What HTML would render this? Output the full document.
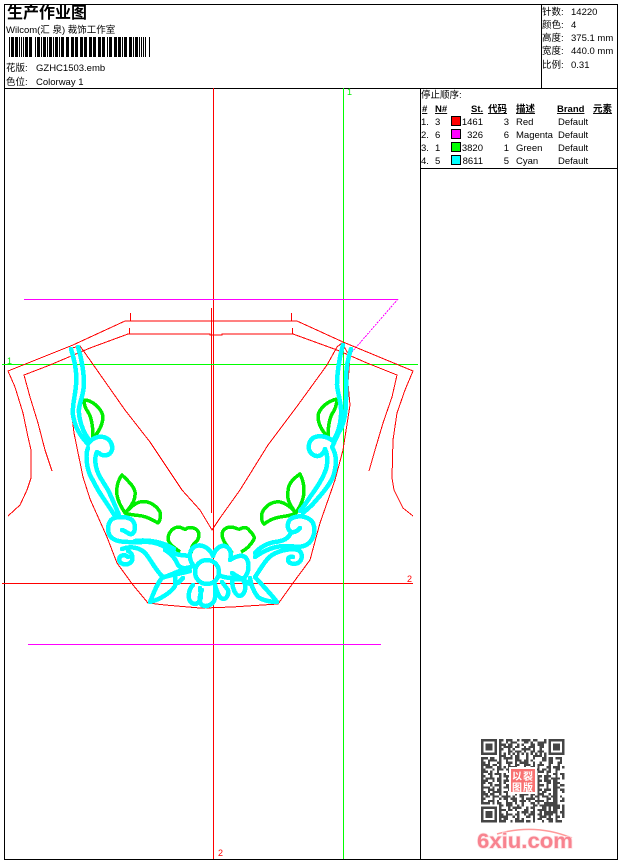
<!DOCTYPE html>
<html><head><meta charset="utf-8"><title>生产作业图</title>
<style>
html,body{margin:0;padding:0;background:#fff;width:620px;height:860px;overflow:hidden}
svg{display:block;position:absolute;left:0;top:0}
text{font-family:"Liberation Sans","WenQuanYi Zen Hei","Noto Sans CJK SC",sans-serif;font-size:9.5px;fill:#000}
.b{font-weight:bold;text-decoration:underline}
.l{fill:none;stroke:#000;stroke-width:1}
.r{fill:none;stroke:#f00;stroke-width:1}
.c{fill:none;stroke:#0ff;stroke-width:4.5;stroke-linejoin:round;stroke-linecap:round}
.g{fill:none;stroke:#0e0;stroke-width:3.5;stroke-linejoin:round}
.q path{fill:none;stroke:#444;stroke-width:1}
</style></head><body>
<svg width="620" height="860" viewBox="0 0 620 860" xmlns="http://www.w3.org/2000/svg">
<defs><filter id="bl" x="-5%" y="-5%" width="110%" height="110%"><feGaussianBlur stdDeviation="0.35"/></filter></defs>
<g shape-rendering="crispEdges">
<path d="M4.5 4.5H617.5V859.5H4.5Z" class="l"/>
<path d="M4.5 88.5H617.5M541.5 4.5V88.5M420.5 88.5V859.5M420.5 168.5H617.5" class="l"/>
<path d="M9 47H150" stroke="#000" stroke-width="20" fill="none" stroke-dasharray="1 1 3 1 3 1 1 1 1 1 1 1 3 1 3 3 1 1 3 1 1 1 3 1 1 1 3 1 1 1 3 1 1 1 3 2 3 2 3 1 3 2 3 1 3 2 3 1 3 2 3 1 3 2 1 1 3 2 3 1 3 1 1 1 3 2 3 1 1 1 3 1 1 1 1 1 1"/>
</g>
<text x="7" y="18" style="font-size:16px;font-weight:bold">生产作业图</text>
<text x="6" y="33">Wilcom(汇 泉) 裁饰工作室</text>
<text x="6" y="71">花版:</text><text x="36" y="71">GZHC1503.emb</text>
<text x="6" y="85">色位:</text><text x="36" y="85">Colorway 1</text>
<text x="542" y="15">针数:</text><text x="571" y="15">14220</text>
<text x="542" y="28">颜色:</text><text x="571" y="28">4</text>
<text x="542" y="41">高度:</text><text x="571" y="41">375.1 mm</text>
<text x="542" y="54">宽度:</text><text x="571" y="54">440.0 mm</text>
<text x="542" y="68">比例:</text><text x="571" y="68">0.31</text>
<text x="421" y="98">停止顺序:</text>
<text class="b" x="422" y="112">#</text><text class="b" x="435" y="112">N#</text><text class="b" x="471" y="112">St.</text><text class="b" x="488" y="112">代码</text><text class="b" x="516" y="112">描述</text><text class="b" x="557" y="112">Brand</text><text class="b" x="593" y="112">元素</text>
<g shape-rendering="crispEdges" stroke="#000">
<rect x="451.5" y="116.5" width="9" height="9" fill="#f00"/>
<rect x="451.5" y="129.5" width="9" height="9" fill="#f0f"/>
<rect x="451.5" y="142.5" width="9" height="9" fill="#0f0"/>
<rect x="451.5" y="155.5" width="9" height="9" fill="#0ff"/>
</g>
<text x="421" y="125">1.</text><text x="435" y="125">3</text><text x="483" y="125" text-anchor="end">1461</text><text x="509" y="125" text-anchor="end">3</text><text x="516" y="125">Red</text><text x="558" y="125">Default</text>
<text x="421" y="138">2.</text><text x="435" y="138">6</text><text x="483" y="138" text-anchor="end">326</text><text x="509" y="138" text-anchor="end">6</text><text x="516" y="138">Magenta</text><text x="558" y="138">Default</text>
<text x="421" y="151">3.</text><text x="435" y="151">1</text><text x="483" y="151" text-anchor="end">3820</text><text x="509" y="151" text-anchor="end">1</text><text x="516" y="151">Green</text><text x="558" y="151">Default</text>
<text x="421" y="164">4.</text><text x="435" y="164">5</text><text x="483" y="164" text-anchor="end">8611</text><text x="509" y="164" text-anchor="end">5</text><text x="516" y="164">Cyan</text><text x="558" y="164">Default</text>

<g shape-rendering="crispEdges">
<path d="M213.5 88V859M2 583.5H413M211.5 308V513" class="r"/>
<path d="M343.5 88V859M2 364.5H418" fill="none" stroke="#0f0" stroke-width="1"/>
<path d="M24 299.5H398M28 644.5H381" fill="none" stroke="#f0f" stroke-width="1"/>
<path d="M398 299L352 352" fill="none" stroke="#f0f" stroke-width="1" stroke-dasharray="2 1"/>
<path class="r" d="M27 490L20 505L8 516M27 490L31 478V450L28 437L23 413L15 387L8 371L73 345L125 321H297L343 342L413 371L405 390L397 413L393 440L392 478L394 490L403 508L413 516"/>
<path class="r" d="M130.500 313V321M291.500 313V321M129.500 328V334M292.500 328V334"/>
<path class="r" d="M52 471L45 450L38 423L30 397L24 375L50 365L90 348L128 334H210V335H222V334H293L337 350L367 363L397 375L392 397L383 423L375 450L369 471"/>
<path class="r" d="M72 348L80 346L85 353L125 410L150 442L182 490L200 510L212 530L220 518L240 490L268 445L298 405L327 365L337 347L342 343L350 357L348 383L350 405L343 450L335 480L320 523L310 560L293 583L278 604L232 607L205 608H200L165 605L148 603L133 585L117 563L107 537L90 499L83 477L74 433L72 417V405"/>
<!-- green -->
<path class="g" d="M84 400C92 400 101 408 103 416C103 425 98 433 93 438C93 428 92 418 88 412C85 408 84 404 84 400Z"/>
<path class="g" d="M337 399C328 401 319 408 318 416C318 425 323 432 328 437C328 428 329 420 332 414C335 410 337 404 337 399Z"/>
<path class="g" d="M122 475C127 480 134 486 135 492C136 500 130 508 125 513C122 508 118 502 117 495C116 488 118 480 122 475Z"/>
<path class="g" d="M125 513C130 508 135 503 140 502C148 500 156 505 160 512C161 516 160 521 158 523C153 520 147 517 142 516C136 515 130 515 125 513Z"/>
<path class="g" d="M300 474C294 478 288 484 288 491C286 500 292 508 296 513C300 506 304 500 304 490C304 484 302 478 300 474Z"/>
<path class="g" d="M296 513C291 507 285 503 280 502C272 501 265 506 262 513C261 518 262 522 264 524C268 521 274 518 280 517C285 516 291 516 296 513Z"/>
<path class="g" d="M180 552C175 548 168 544 168 538C169 531 174 527 179 527C183 528 185 530 186 529C188 527 194 527 197 530C200 533 199 538 197 541C193 544 191 547 191 553"/>
<path class="g" d="M232 553C229 547 223 543 222 535C222 530 226 527 231 527C235 527 238 530 240 529C243 527 247 527 249 530C252 533 255 537 254 539C251 545 247 549 241 552"/>
<!-- cyan left -->
<path class="c" d="M71 349C75 362 77 372 76 385C75 398 72 405 73 415C75 428 82 438 88 444C92 438 98 436 103 437C110 438 113 445 112 450C110 456 103 457 99 453"/>
<path class="c" d="M97 452C94 458 95 468 100 477L108 490C112 498 116 508 119 515"/>
<path class="c" d="M78 347C82 360 84 372 84 385C83 398 78 405 79 413C80 425 85 435 90 441"/>
<path class="c" d="M88 448C85 455 87 468 90 475L98 490C103 498 110 508 115 516"/>
<path class="c" d="M122 530C126 531 129 535 132 534C136 531 136 524 132 520C127 516 115 516 111 520C107 525 107 534 112 538C118 543 130 542 142 542C155 541 165 546 172 552C178 556 185 555 190 556"/>
<path class="c" d="M135 541C150 539 165 543 174 549"/>
<path class="c" d="M128 557C125 554 120 555 119 559C119 564 126 566 130 563C134 560 133 553 128 551"/>
<path class="c" d="M122 549C130 546 140 547 146 554C152 562 157 572 163 577"/>
<path class="c" d="M150 602C154 592 157 584 162 578C168 575 176 575 190 571M150 602C158 600 170 594 175 586L175 575"/>
<!-- cyan right -->
<path class="c" d="M343 345C340 355 337 372 337 385C338 395 342 405 341 415C340 428 337 435 333 441C327 436 318 435 313 438C308 442 307 450 312 454C317 458 323 456 325 449C328 455 328 465 325 472C321 482 315 490 310 497C307 502 303 507 300 511"/>
<path class="c" d="M351 349C348 358 346 368 346 380L346 400C346 412 344 425 339 432L333 445"/>
<path class="c" d="M332 447C337 455 337 465 333 477C328 488 318 498 312 505L303 513"/>
<path class="c" d="M300 528C296 533 290 534 288 528C287 522 290 518 295 517C303 515 310 518 313 523C316 530 314 538 309 543C302 549 295 546 285 546C272 546 262 552 255 557"/>
<path class="c" d="M255 553C260 547 268 543 275 542C283 541 289 539 291 532"/>
<path class="c" d="M255 577C260 570 265 560 272 555C280 550 292 548 298 550C303 552 303 560 298 563C293 565 288 563 288 560C288 557 291 556 293 557"/>
<path class="c" d="M255 577C262 585 272 595 277 602C270 602 262 600 258 597C254 592 251 585 250 578M232 573L250 584"/>
<!-- flower -->
<circle class="c" cx="207" cy="572" r="12"/>
<path class="c" d="M193 565C188 558 189 549 196 546C202 544 210 548 213 556C215 549 220 545 225 546C231 548 232 555 230 560C236 556 243 554 246 558C250 563 249 572 245 577C241 580 235 580 232 578C228 578 222 577 219 575"/>
<path class="c" d="M193 566C188 568 182 570 178 565C176 560 172 554 165 550M165 577L182 570M178 583L183 578"/>
<path class="c" d="M193 585C188 590 187 600 192 603C196 606 201 602 201 595L200 588M202 590C199 596 199 603 202 605C207 608 214 604 215 598L215 585M215 585C217 592 219 598 223 599C227 599 229 594 228 590L222 582M232 578C232 586 234 594 239 596C244 596 246 590 245 584L242 578"/>
</g>
<text x="347" y="95" style="fill:#0e0;font-size:9px">1</text>
<text x="7" y="364" style="fill:#0e0;font-size:9px">1</text>
<text x="407" y="582" style="fill:#f00;font-size:9px">2</text>
<text x="218" y="856" style="fill:#f00;font-size:9px">2</text>

<!-- QR -->
<g filter="url(#bl)">
<g class="q" transform="translate(481 739) scale(2.25)" shape-rendering="crispEdges">
<path d="M8 .5H29" stroke-dasharray="2 1 3 2 1 1 4 1 2 3 1"/>
<path d="M8 1.500H29" stroke-dasharray="1 2 1 1 3 3 2 1 1 2 4"/>
<path d="M8 2.500H29" stroke-dasharray="3 1 2 2 1 1 1 3 2 1 3"/>
<path d="M8 3.500H29" stroke-dasharray="1 1 4 1 2 2 1 1 3 2 2"/>
<path d="M8 4.500H29" stroke-dasharray="2 2 1 1 1 3 4 1 1 2 1"/>
<path d="M8 5.500H29" stroke-dasharray="1 3 2 1 3 1 1 2 2 1 3"/>
<path d="M8 6.500H29" stroke-dasharray="1 1 1 1 1 1 1 1 1 1 1 1 1 1 1 1 1 1 1 1 1"/>
<path d="M8 7.500H29" stroke-dasharray="3 2 1 1 2 3 1 2 4 1 1"/>
<path d="M0 8.500H37" stroke-dasharray="3 1 2 2 1 1 4 1 2 3 1 2 1 3 2 1 2 1 3"/>
<path d="M0 9.500H37" stroke-dasharray="1 2 4 1 1 2 1 3 3 1 2 1 1 4 2 1 2 3 1"/>
<path d="M0 10.500H37" stroke-dasharray="2 1 1 3 2 2 3 1 1 1 4 2 1 2 1 3 2 2 2"/>
<path d="M0 11.500H37" stroke-dasharray="4 1 2 1 1 3 1 2 2 2 3 1 1 1 3 2 1 3 1"/>
<path d="M0 12.500H37" stroke-dasharray="1 1 3 2 2 1 1 1 4 3 1 2 2 1 1 3 2 1 3"/>
<path d="M0 13.500H37" stroke-dasharray="2 3 1 1 3 1 2 2 1 1 3 2 4 1 2 1 1 2 2"/>
<path d="M0 14.500H37" stroke-dasharray="3 1 1 2 1 4 2 1 1 3 2 1 1 2 3 1 2 2 1"/>
<path d="M0 15.500H37" stroke-dasharray="1 2 2 1 3 1 1 3 2 1 1 2 3 1 1 4 1 2 2"/>
<path d="M0 16.500H37" stroke-dasharray="2 2 1 3 1 1 4 1 2 2 1 3 1 1 2 1 3 2 1"/>
<path d="M0 17.500H37" stroke-dasharray="1 1 4 1 2 2 1 2 3 1 1 1 2 3 1 2 2 1 4"/>
<path d="M0 18.500H37" stroke-dasharray="3 2 1 1 2 1 3 1 1 2 4 1 1 2 2 1 3 1 2"/>
<path d="M0 19.500H37" stroke-dasharray="2 1 2 3 1 1 1 4 2 1 1 2 3 1 1 3 2 1 3"/>
<path d="M0 20.500H37" stroke-dasharray="1 3 1 1 3 2 2 1 1 4 1 1 2 2 3 1 1 2 2"/>
<path d="M0 21.500H37" stroke-dasharray="4 1 1 2 1 1 3 2 2 1 3 1 2 1 1 3 1 2 3"/>
<path d="M0 22.500H37" stroke-dasharray="1 2 3 1 2 3 1 1 1 2 2 1 4 1 2 1 3 1 2"/>
<path d="M0 23.500H37" stroke-dasharray="2 1 1 1 4 1 2 2 3 1 1 3 1 2 1 1 2 3 2"/>
<path d="M0 24.500H37" stroke-dasharray="3 1 2 2 1 2 1 3 1 1 4 1 2 1 3 2 1 1 2"/>
<path d="M0 25.500H37" stroke-dasharray="1 1 2 1 3 1 4 1 1 2 2 3 1 1 2 1 3 1 3"/>
<path d="M0 26.500H37" stroke-dasharray="2 3 1 2 1 1 2 1 3 2 1 1 4 1 1 3 2 1 2"/>
<path d="M0 27.500H37" stroke-dasharray="1 2 3 1 1 3 1 2 2 1 3 1 1 2 4 1 1 2 2"/>
<path d="M0 28.500H37" stroke-dasharray="4 1 1 1 2 2 3 1 1 2 1 3 2 1 1 2 3 1 2"/>
<path d="M8 29.500H37" stroke-dasharray="2 1 3 2 1 1 1 4 2 1 2 1 3 1 2 1 1"/>
<path d="M8 30.500H37" stroke-dasharray="1 3 1 1 4 2 1 1 2 3 1 2 1 1 3 1 2"/>
<path d="M8 31.500H37" stroke-dasharray="3 1 2 1 1 3 2 2 1 1 4 1 1 2 1 2 3"/>
<path d="M8 32.500H37" stroke-dasharray="1 2 1 4 1 1 3 1 2 2 1 3 2 1 1 1 2"/>
<path d="M8 33.500H37" stroke-dasharray="2 1 3 1 2 2 1 1 3 1 2 1 4 1 1 2 1"/>
<path d="M8 34.500H37" stroke-dasharray="4 2 1 1 1 3 2 1 1 2 3 1 1 2 2 1 3"/>
<path d="M8 35.500H37" stroke-dasharray="1 1 2 3 2 1 1 4 1 1 2 2 3 1 1 3 1"/>
<path d="M8 36.500H37" stroke-dasharray="3 2 1 1 4 1 2 1 1 3 1 2 2 1 3 1 2"/>
<path style="stroke:none;fill:#fff" d="M0 0H8V8H0ZM29 0H37V8H29ZM0 29H8V37H0Z"/>
<path style="stroke:none;fill:#444" fill-rule="evenodd" d="M0 0H7V7H0ZM1 1V6H6V1ZM2 2H5V5H2ZM30 0H37V7H30ZM31 1V6H36V1ZM32 2H35V5H32ZM0 30H7V37H0ZM1 31V36H6V31ZM2 32H5V35H2ZM28 28H33V33H28ZM29 29V32H32V29ZM30 30H31V31H30Z"/>
</g>
</g>
<!-- stamp -->
<rect x="509" y="767" width="28" height="27" fill="#fff"/>
<rect x="511" y="769" width="24" height="23" fill="#f87171"/>
<text x="512" y="780" style="font-size:10px;fill:#fff;font-weight:bold">以</text>
<text x="523" y="780" style="font-size:10px;fill:#fff;font-weight:bold">裂</text>
<text x="512" y="791" style="font-size:10px;fill:#fff;font-weight:bold">图</text>
<text x="523" y="791" style="font-size:10px;fill:#fff;font-weight:bold">版</text>
<!-- logo -->
<path d="M497 834Q535 823 572 838" fill="none" stroke="#f99" stroke-width="1.500"/>
<text x="477" y="848" textLength="96" lengthAdjust="spacingAndGlyphs" style="font-size:21px;font-weight:bold;fill:#f8838f;stroke:#fde2e4;stroke-width:1.500;paint-order:stroke">6xiu.com</text>
</svg>
</body></html>
